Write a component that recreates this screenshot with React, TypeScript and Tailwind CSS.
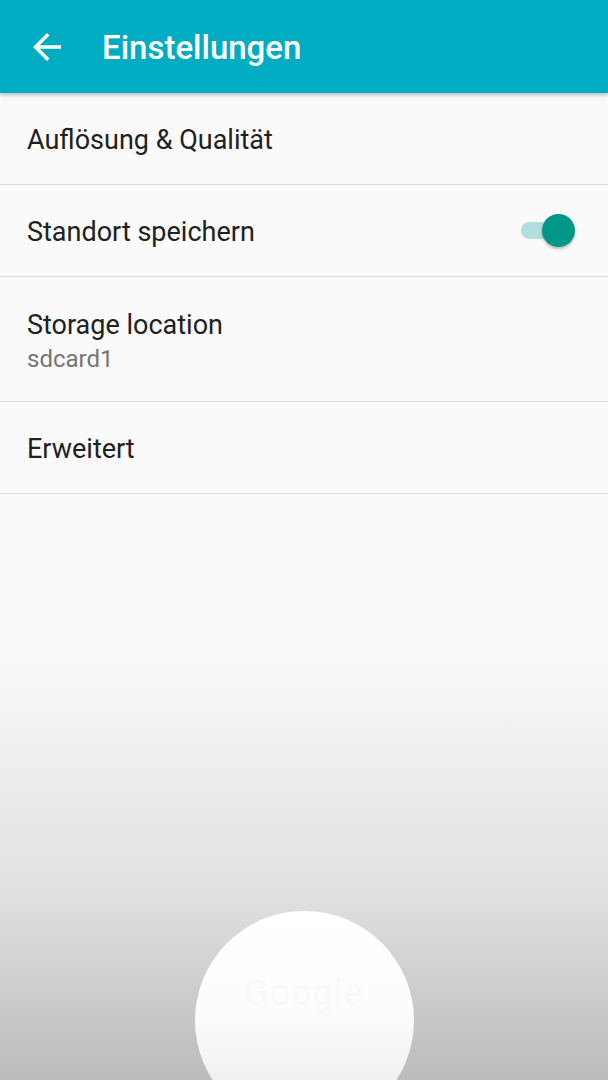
const rows = [
  { title: "Auflösung & Qualität" },
  { title: "Standort speichern", toggle: true },
  { title: "Storage location", sub: "sdcard1" },
  { title: "Erweitert" },
];

const Toggle = () => (
  <div className="relative w-[54px] h-[34px] flex items-center">
    <div className="absolute left-0 w-[46px] h-[17px] rounded-full bg-[#b2dfdb]" />
    <div className="absolute right-0 w-[33px] h-[33px] rounded-full bg-[#009688] shadow-[0_2px_3px_rgba(0,0,0,0.25)]" />
  </div>
);

export default function App() {
  return (
    <div
      className="h-[1080px] w-full overflow-hidden flex flex-col bg-[linear-gradient(to_bottom,#fafafa_0%,#fafafa_60%,#e0e0e0_83%,#bbbbbb_100%)]"
      style={{ fontFamily: "Roboto, 'Noto Sans', sans-serif" }}
    >
      <header className="h-[93px] shrink-0 bg-[#00acc1] flex items-center shadow-[0_2px_4px_rgba(0,0,0,0.25)] relative z-10">
        <svg viewBox="0 0 24 24" className="w-[42px] h-[42px] ml-[26px] fill-white">
          <path d="M20 11H7.83l5.59-5.59L12 4l-8 8 8 8 1.41-1.41L7.83 13H20v-2z" />
        </svg>
        <h1 className="ml-[34px] text-white text-[33px] font-medium leading-[40px] mt-[2px]">
          Einstellungen
        </h1>
      </header>

      <div className="flex flex-col bg-[#fafafa]">
        {rows.map((r) => (
          <div
            key={r.title}
            className={`flex items-center justify-between pl-[27px] pr-[33px] border-b border-[#dadada] ${
              r.sub ? "h-[125px]" : "h-[92px]"
            }`}
          >
            <div className="flex flex-col pt-[3px]">
              <span className="text-[27px] text-[#212121] leading-[34px]">{r.title}</span>
              {r.sub && (
                <span className="text-[24px] text-[#757575] leading-[30px] mt-[2px]">{r.sub}</span>
              )}
            </div>
            {r.toggle && <Toggle />}
          </div>
        ))}
      </div>

      <div className="flex-1 flex justify-center pt-[417px]">
        <div className="shrink-0 w-[219px] h-[219px] rounded-full bg-[linear-gradient(to_bottom,#ffffff_0%,#fcfcfc_45%,#e9e9e9_100%)] flex justify-center pt-[55px]">
          <span className="text-[36px] text-[#f8f8f8] tracking-[1px] h-fit">Google</span>
        </div>
      </div>
    </div>
  );
}
